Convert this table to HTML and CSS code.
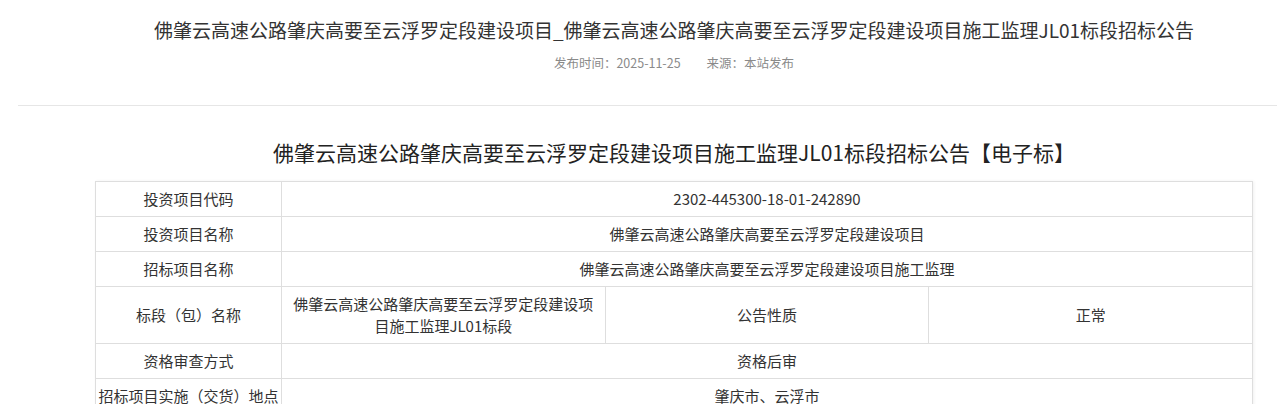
FILE: index.html
```html
<!DOCTYPE html>
<html lang="zh-CN">
<head>
    <meta charset="UTF-8">
    <meta name="viewport" content="width=device-width, initial-scale=1.0">
    <title>招标公告</title>
    <link rel="stylesheet" href="styles.css">
</head>
<body>
    <div class="page">
        <div class="header">
            <h1 class="title">佛肇云高速公路肇庆高要至云浮罗定段建设项目_佛肇云高速公路肇庆高要至云浮罗定段建设项目施工监理JL01标段招标公告</h1>
            <p class="meta"><span>发布时间：2025-11-25</span><span>来源：本站发布</span></p>
        </div>
        <div class="content">
            <h2 class="sub-title">佛肇云高速公路肇庆高要至云浮罗定段建设项目施工监理JL01标段招标公告【电子标】</h2>
            <table class="info">
                <colgroup>
                    <col class="col-label">
                    <col>
                    <col>
                    <col>
                </colgroup>
                <tr>
                    <td>投资项目代码</td>
                    <td colspan="3">2302-445300-18-01-242890</td>
                </tr>
                <tr>
                    <td>投资项目名称</td>
                    <td colspan="3">佛肇云高速公路肇庆高要至云浮罗定段建设项目</td>
                </tr>
                <tr>
                    <td>招标项目名称</td>
                    <td colspan="3">佛肇云高速公路肇庆高要至云浮罗定段建设项目施工监理</td>
                </tr>
                <tr>
                    <td>标段（包）名称</td>
                    <td>佛肇云高速公路肇庆高要至云浮罗定段建设项目施工监理JL01标段</td>
                    <td>公告性质</td>
                    <td>正常</td>
                </tr>
                <tr>
                    <td>资格审查方式</td>
                    <td colspan="3">资格后审</td>
                </tr>
                <tr>
                    <td>招标项目实施（交货）地点</td>
                    <td colspan="3">肇庆市、云浮市</td>
                </tr>
            </table>
        </div>
    </div>
</body>
</html>
```

FILE: styles.css
```css
body {
    margin: 0;
    padding: 0;
    overflow: hidden;
    background: white;
    color: #333;
    font-family: "Noto Sans CJK SC", "Noto Sans", sans-serif;
}
.page {
    width: 1312px;
    margin-left: 18px;
}
.header {
    text-align: center;
    padding-top: 16px;
    padding-bottom: 32px;
    border-bottom: 1px solid #e6e6e6;
}
.title {
    margin: 0;
    font-size: 19px;
    line-height: 28px;
    font-weight: normal;
    color: #333;
}
.meta {
    margin: 9px 0 0;
    font-size: 12.5px;
    line-height: 20px;
    color: #8a8a8a;
}
.meta span + span {
    margin-left: 26px;
}
.content {
    padding: 0 77px;
}
.sub-title {
    margin: 31px 0 14px;
    text-align: center;
    font-size: 21px;
    line-height: 30px;
    font-weight: normal;
    color: #222;
}
.info {
    width: 100%;
    border-collapse: collapse;
    table-layout: fixed;
    box-shadow: 1px 0 3px rgba(0, 0, 0, 0.06);
}
.col-label {
    width: 186px;
}
.info td {
    border: 1px solid #dedede;
    padding: 6px 10px;
    font-size: 15px;
    line-height: 22px;
    text-align: center;
    color: #333;
}
.info td:first-child {
    padding: 6px 2px;
}
```
